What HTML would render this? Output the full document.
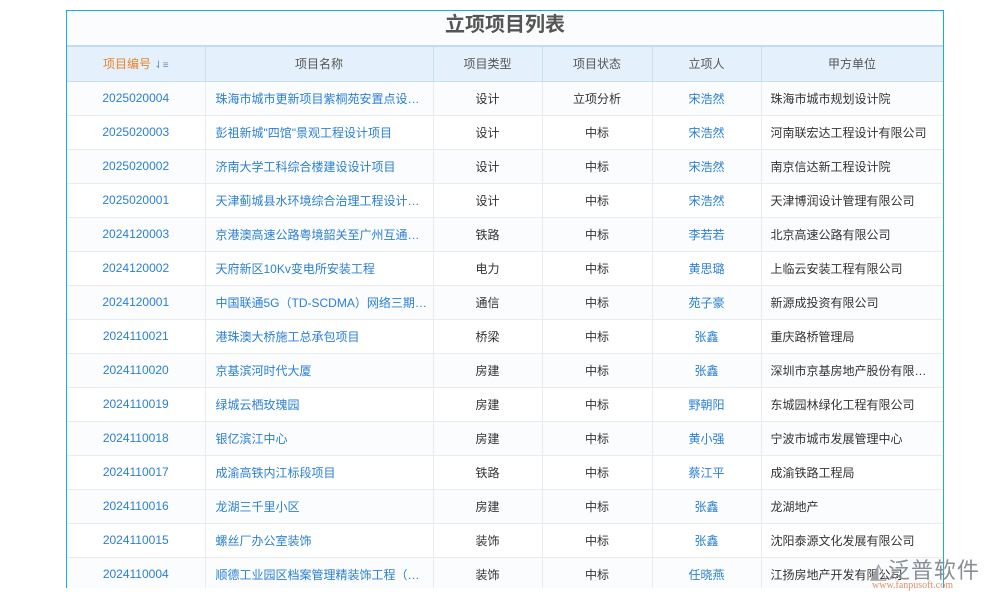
<!DOCTYPE html>
<html><head><meta charset="utf-8"><style>
body{margin:0;background:#fff;width:1000px;height:600px;overflow:hidden;font-family:"Liberation Sans","Noto Sans CJK SC",sans-serif;font-size:12px;position:relative}
.f{position:absolute;left:66px;top:10px;width:876px;height:577px;border:1px solid #18aaf0;border-bottom:none;overflow:hidden;background:#fff}
.t{height:34px;line-height:28px;text-align:center;font-size:20px;font-weight:bold;color:#555;background:#fafcfd;border-bottom:2px solid #bfdcf2}
table{border-collapse:collapse;width:876px;table-layout:fixed}
th,td{padding:0;height:33px;box-sizing:border-box}
th{height:34px;background:#e4f1fc;color:#555;font-weight:normal;border-right:1px solid #c8dff0;border-bottom:1px solid #c8dff0;font-size:12px}
td{height:34px;border-bottom:1px solid #e8ecef;border-right:1px solid #e8ecef;text-align:center;color:#333;white-space:nowrap;overflow:hidden}
td.a,td.p{color:#2a7fd4}
td.n{text-align:left;padding-left:10px;color:#2a7fd4}
td.u{text-align:left;padding-left:9px}
tr:nth-child(even) td{background:#fbfcfd}
.wm{position:absolute;left:870px;top:553px;font-size:22px;color:#8a8f95;letter-spacing:1px}
.wm2{position:absolute;left:872px;top:580px;font-size:10px;color:#e2906a;font-family:"Liberation Serif",serif}
</style></head><body>
<div class="f">
<div class="t">立项项目列表</div>
<table>
<colgroup><col style="width:138px"><col style="width:228px"><col style="width:109px"><col style="width:110px"><col style="width:109px"><col style="width:182px"></colgroup>
<tr><th style="color:#e8822a">项目编号 <span style="color:#6a8caf;font-size:10px">⇃≡</span></th><th>项目名称</th><th>项目类型</th><th>项目状态</th><th>立项人</th><th>甲方单位</th></tr>
<tr><td class="a">2025020004</td><td class="n">珠海市城市更新项目紫桐苑安置点设…</td><td>设计</td><td>立项分析</td><td class="p">宋浩然</td><td class="u">珠海市城市规划设计院</td></tr>
<tr><td class="a">2025020003</td><td class="n">彭祖新城"四馆"景观工程设计项目</td><td>设计</td><td>中标</td><td class="p">宋浩然</td><td class="u">河南联宏达工程设计有限公司</td></tr>
<tr><td class="a">2025020002</td><td class="n">济南大学工科综合楼建设设计项目</td><td>设计</td><td>中标</td><td class="p">宋浩然</td><td class="u">南京信达新工程设计院</td></tr>
<tr><td class="a">2025020001</td><td class="n">天津蓟城县水环境综合治理工程设计…</td><td>设计</td><td>中标</td><td class="p">宋浩然</td><td class="u">天津博润设计管理有限公司</td></tr>
<tr><td class="a">2024120003</td><td class="n">京港澳高速公路粤境韶关至广州互通…</td><td>铁路</td><td>中标</td><td class="p">李若若</td><td class="u">北京高速公路有限公司</td></tr>
<tr><td class="a">2024120002</td><td class="n">天府新区10Kv变电所安装工程</td><td>电力</td><td>中标</td><td class="p">黄思璐</td><td class="u">上临云安装工程有限公司</td></tr>
<tr><td class="a">2024120001</td><td class="n">中国联通5G（TD-SCDMA）网络三期…</td><td>通信</td><td>中标</td><td class="p">苑子豪</td><td class="u">新源成投资有限公司</td></tr>
<tr><td class="a">2024110021</td><td class="n">港珠澳大桥施工总承包项目</td><td>桥梁</td><td>中标</td><td class="p">张鑫</td><td class="u">重庆路桥管理局</td></tr>
<tr><td class="a">2024110020</td><td class="n">京基滨河时代大厦</td><td>房建</td><td>中标</td><td class="p">张鑫</td><td class="u">深圳市京基房地产股份有限…</td></tr>
<tr><td class="a">2024110019</td><td class="n">绿城云栖玫瑰园</td><td>房建</td><td>中标</td><td class="p">野朝阳</td><td class="u">东城园林绿化工程有限公司</td></tr>
<tr><td class="a">2024110018</td><td class="n">银亿滨江中心</td><td>房建</td><td>中标</td><td class="p">黄小强</td><td class="u">宁波市城市发展管理中心</td></tr>
<tr><td class="a">2024110017</td><td class="n">成渝高铁内江标段项目</td><td>铁路</td><td>中标</td><td class="p">蔡江平</td><td class="u">成渝铁路工程局</td></tr>
<tr><td class="a">2024110016</td><td class="n">龙湖三千里小区</td><td>房建</td><td>中标</td><td class="p">张鑫</td><td class="u">龙湖地产</td></tr>
<tr><td class="a">2024110015</td><td class="n">螺丝厂办公室装饰</td><td>装饰</td><td>中标</td><td class="p">张鑫</td><td class="u">沈阳泰源文化发展有限公司</td></tr>
<tr><td class="a">2024110004</td><td class="n">顺德工业园区档案管理精装饰工程（…</td><td>装饰</td><td>中标</td><td class="p">任晓燕</td><td class="u">江扬房地产开发有限公司</td></tr>
</table>
</div>
<div class="wm"><span style="color:#9aa0a6">◭</span>泛普软件</div>
<div class="wm2">www.fanpusoft.com</div>
</body></html>
